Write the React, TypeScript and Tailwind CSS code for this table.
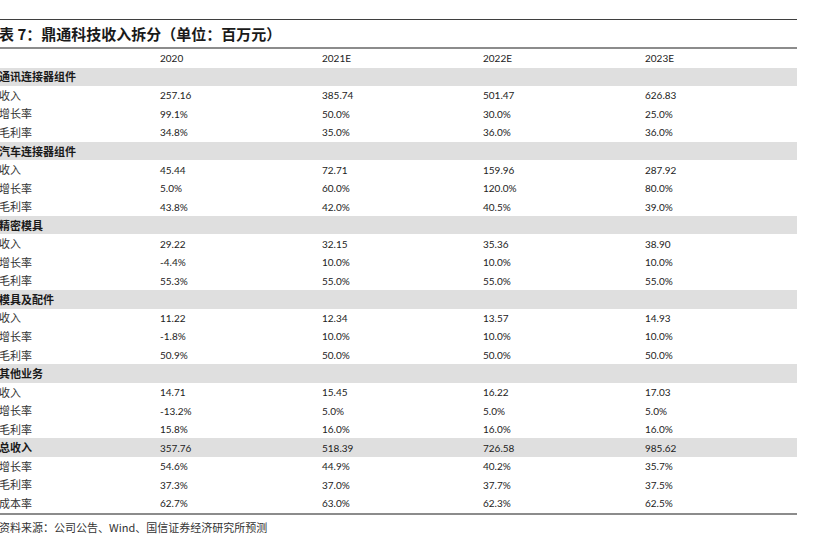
import React from 'react';

type Row = { label: string; values: string[]; section?: boolean };

const rows: Row[] = [
  { label: '通讯连接器组件', values: ['', '', '', ''], section: true },
  { label: '收入', values: ['257.16', '385.74', '501.47', '626.83'] },
  { label: '增长率', values: ['99.1%', '50.0%', '30.0%', '25.0%'] },
  { label: '毛利率', values: ['34.8%', '35.0%', '36.0%', '36.0%'] },
  { label: '汽车连接器组件', values: ['', '', '', ''], section: true },
  { label: '收入', values: ['45.44', '72.71', '159.96', '287.92'] },
  { label: '增长率', values: ['5.0%', '60.0%', '120.0%', '80.0%'] },
  { label: '毛利率', values: ['43.8%', '42.0%', '40.5%', '39.0%'] },
  { label: '精密模具', values: ['', '', '', ''], section: true },
  { label: '收入', values: ['29.22', '32.15', '35.36', '38.90'] },
  { label: '增长率', values: ['-4.4%', '10.0%', '10.0%', '10.0%'] },
  { label: '毛利率', values: ['55.3%', '55.0%', '55.0%', '55.0%'] },
  { label: '模具及配件', values: ['', '', '', ''], section: true },
  { label: '收入', values: ['11.22', '12.34', '13.57', '14.93'] },
  { label: '增长率', values: ['-1.8%', '10.0%', '10.0%', '10.0%'] },
  { label: '毛利率', values: ['50.9%', '50.0%', '50.0%', '50.0%'] },
  { label: '其他业务', values: ['', '', '', ''], section: true },
  { label: '收入', values: ['14.71', '15.45', '16.22', '17.03'] },
  { label: '增长率', values: ['-13.2%', '5.0%', '5.0%', '5.0%'] },
  { label: '毛利率', values: ['15.8%', '16.0%', '16.0%', '16.0%'] },
  { label: '总收入', values: ['357.76', '518.39', '726.58', '985.62'], section: true },
  { label: '增长率', values: ['54.6%', '44.9%', '40.2%', '35.7%'] },
  { label: '毛利率', values: ['37.3%', '37.0%', '37.7%', '37.5%'] },
  { label: '成本率', values: ['62.7%', '63.0%', '62.3%', '62.5%'] },
];

const cjk = "font-['Noto_Sans_CJK_SC',sans-serif]";
const num = "font-['Lato','Noto_Sans_CJK_SC',sans-serif]";
const grid = 'grid grid-cols-[160px_162px_161px_162px_1fr] h-[18.56px] items-center';

export default function App() {
  return (
    <div className="w-[819px] h-[541px] bg-white pt-[19px] overflow-hidden">
      <div className="w-[797px]">
        {/* title */}
        <div className="border-t border-[#3f3f3f] h-[28px] flex items-center">
          <h1 className={`${cjk} text-[15px] font-bold text-[#1a1a1a] -ml-[1px] leading-none`}>
            表 7：鼎通科技收入拆分（单位：百万元）
          </h1>
        </div>
        <div className="h-[2px] bg-[#8c8c8c]" />

        {/* header */}
        <div className={`${grid} text-[10px] text-[#222] ${num}`}>
          <span />
          <span>2020</span>
          <span>2021E</span>
          <span>2022E</span>
          <span>2023E</span>
        </div>

        {rows.map((r, i) => (
          <div key={i} className={`${grid} ${r.section ? 'bg-[#dfdfdf]' : ''}`}>
            <span
              className={`${cjk} text-[11px] -ml-[1px] leading-none ${
                r.section ? 'font-bold text-[#1a1a1a]' : 'text-[#333]'
              }`}
            >
              {r.label}
            </span>
            {r.values.map((v, j) => (
              <span key={j} className={`${num} text-[10px] text-[#222] leading-none`}>
                {v}
              </span>
            ))}
          </div>
        ))}

        <div className="h-[2px] bg-[#8c8c8c]" />
        <p className={`${cjk} text-[11px] text-[#333] mt-[5px] -ml-[1px] leading-[14px]`}>
          资料来源：公司公告、Wind、国信证券经济研究所预测
        </p>
      </div>
    </div>
  );
}
